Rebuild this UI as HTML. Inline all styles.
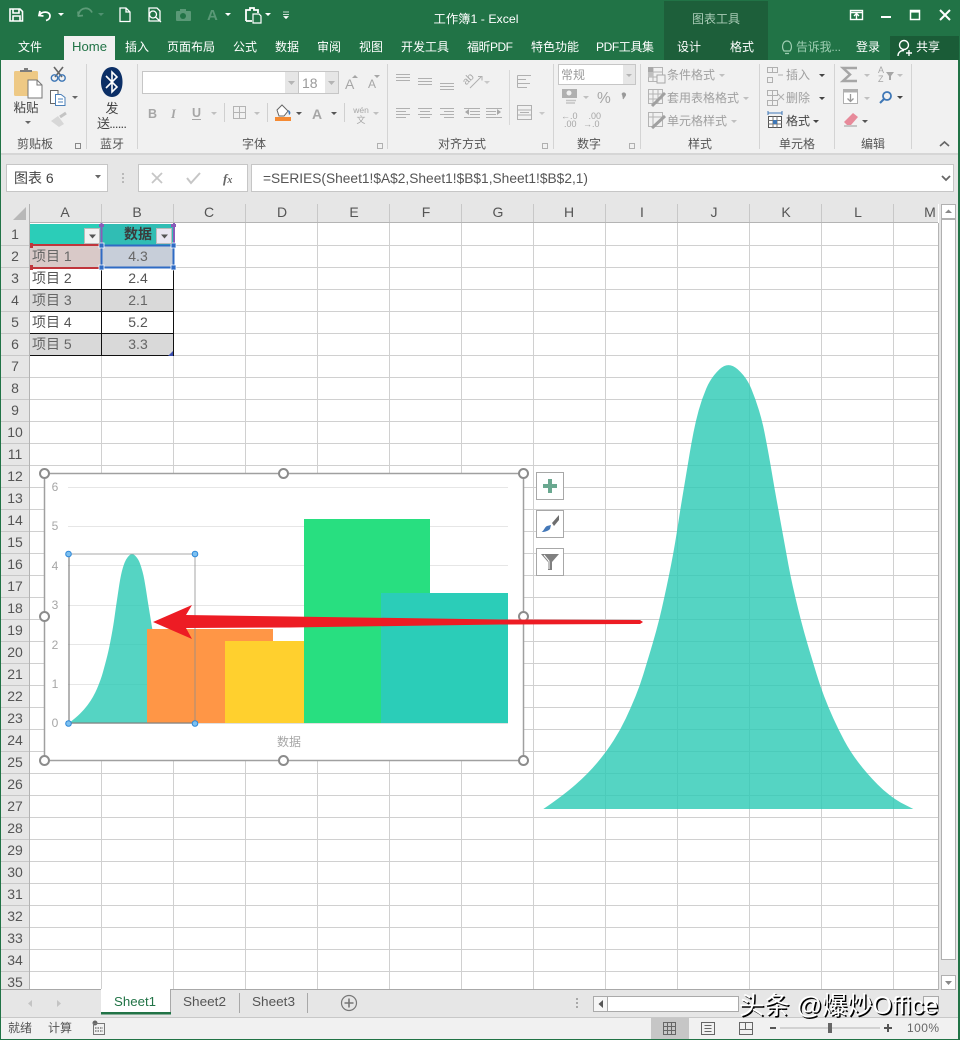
<!DOCTYPE html>
<html><head><meta charset="utf-8"><title>工作簿1 - Excel</title>
<style>
html,body{margin:0;padding:0;width:960px;height:1040px;overflow:hidden;background:#fff}
svg{display:block}
text{font-family:"Liberation Sans","Noto Sans CJK SC",sans-serif;font-size:12px;white-space:pre}
.w{fill:#fff}.d{fill:#444}.g{fill:#a6a6a6}.m{text-anchor:middle}
.h text{font-size:14px;fill:#555}
</style></head><body>
<svg width="960" height="1040" viewBox="0 0 960 1040" xmlns="http://www.w3.org/2000/svg">
<defs>
<path id="bell" d="M40 1377Q100 1336 137.5 1303Q175 1270 202.5 1237Q230 1204 251 1171Q272 1138 287.5 1105Q303 1072 316.5 1039Q330 1006 340 973Q350 940 360 907Q370 874 379 841Q388 808 395.5 775Q403 742 410 709Q417 676 423.5 643Q430 610 435.5 577Q441 544 446 511Q451 478 456.5 445Q462 412 467.5 379Q473 346 478.5 313Q484 280 490.5 247Q497 214 506 181Q515 148 529 115Q543 82 569 57.5Q595 33 622.5 57.5Q650 82 663.5 115Q677 148 687 181Q697 214 703.5 247Q710 280 716 313Q722 346 727.5 379Q733 412 739 445Q745 478 751 511Q757 544 763 577Q769 610 775 643Q781 676 788.5 709Q796 742 804 775Q812 808 821 841Q830 874 840 907Q850 940 860 973Q870 1006 882.5 1039Q895 1072 910 1105Q925 1138 942.5 1171Q960 1204 985 1237Q1010 1270 1042.5 1303Q1075 1336 1112.5 1358L1150 1377Z"/>
</defs>

<!-- title bar -->
<rect width="960" height="60" fill="#217346"/>
<rect x="664" y="1" width="104" height="59" fill="#1d5f3a"/>
<rect x="890" y="36" width="69" height="24" fill="#1a5c37"/>
<rect x="64" y="36" width="51" height="24" fill="#f1f1f1"/>
<!-- QAT icons -->
<g fill="none" stroke="#fff" stroke-width="1.6">
<path d="M10 9H20L22.5 11.5V21H10Z"/><path d="M13 9V13H19V9M13 21V16H20V21"/>
<path d="M40 11L39 15.5L43.5 16M39.5 15C42 11 50 11 50 16C50 18.5 48 20 46 20.5" stroke-width="1.8"/>
<path d="M120 8H126L130 12V21.500H120Z M126 8V12H130" stroke-width="1.3"/>
<path d="M149 8H157L160 11V21H149Z M153 18A3.5 3.5 0 1 0 153 11A3.5 3.5 0 1 0 153 18M155.5 17L161 22" stroke-width="1.3"/>
<path d="M246 21V10H250V8H254V10H258V13M246 21H252" stroke-width="1.8"/>
<path d="M253 14H259L261 16V23H253Z" stroke-width="1.2"/>
</g>
<path d="M92 11.5A7 7 0 0 0 79 12L78 15M78 10.5L78.5 15L83 14.5" fill="none" stroke="#5d9b78" stroke-width="1.8" transform="translate(0,1)"/>
<rect x="176" y="11" width="15" height="10" rx="1" fill="#5a9977"/><rect x="180" y="9" width="6" height="3" fill="#5a9977"/><circle cx="183" cy="16" r="3" fill="#217346"/>
<text x="207" y="20" style="font-size:15px;font-weight:bold" fill="#5a9977">A</text>
<path d="M58 13H64L61 16Z" fill="#fff"/><path d="M98 13H104L101 16Z" fill="#4f9170"/>
<path d="M225 13H231L228 16ZM265 13H271L268 16Z" fill="#fff"/>
<path d="M283 12H289M283 14.5H289M284 16.5H288L286 18.5Z" stroke="#fff" fill="#fff" stroke-width=".8"/>
<text x="476" y="23" class="w m" textLength="85" lengthAdjust="spacingAndGlyphs">工作簿1 - Excel</text>
<text x="716" y="23" class="m" fill="#a9cbb6">图表工具</text>
<!-- window buttons -->
<g fill="none" stroke="#fff" stroke-width="1.4">
<rect x="850.5" y="10.5" width="12" height="9"/><path d="M856.5 19V14M854 16L856.5 13.5L859 16M850.5 12.5H862.5"/>
<path d="M881 17H891" stroke-width="2"/>
<rect x="910.5" y="10.5" width="9" height="9" stroke-width="1.5"/><path d="M910.5 11.5H919.5" stroke-width="2.2"/>
<path d="M940 10L950 20M950 10L940 20" stroke-width="2"/>
</g>
<!-- tabs -->
<text x="18" y="51" class="w">文件</text>
<text x="72" y="51" style="font-size:13px" fill="#217346" textLength="35" lengthAdjust="spacingAndGlyphs">Home</text>
<text x="125" y="51" class="w">插入</text><text x="167" y="51" class="w">页面布局</text>
<text x="233" y="51" class="w">公式</text><text x="275" y="51" class="w">数据</text>
<text x="317" y="51" class="w">审阅</text><text x="359" y="51" class="w">视图</text>
<text x="401" y="51" class="w">开发工具</text>
<text x="467" y="51" class="w" textLength="46">福昕PDF</text>
<text x="531" y="51" class="w">特色功能</text>
<text x="596" y="51" class="w" textLength="58">PDF工具集</text>
<text x="677" y="51" class="w">设计</text><text x="730" y="51" class="w">格式</text>
<text x="796" y="51" fill="#9dcdb1" textLength="45">告诉我...</text>
<text x="856" y="51" class="w">登录</text><text x="916" y="51" class="w">共享</text>
<path d="M785 53.5H789M784 51C781 47 783 41 787 41C791 41 793 47 790 51Z" fill="none" stroke="#9dcdb1" stroke-width="1.2"/>
<circle cx="904" cy="45" r="4.5" fill="none" stroke="#fff" stroke-width="1.4"/><path d="M898 56C898 52 901 50.5 904 50.5M906 53H912M909 50V56" fill="none" stroke="#fff" stroke-width="1.4"/>

<!-- ribbon -->
<rect y="60" width="960" height="93" fill="#f1f1f1"/>
<rect y="153" width="960" height="2" fill="#d6d6d6"/>
<rect y="155" width="960" height="49" fill="#e6e6e6"/>
<path d="M86.5 64V149M137.5 64V149M387.5 64V149M553.5 64V149M640.5 64V149M759.5 64V149M834.5 64V149M911.5 64V149" stroke="#d4d4d4"/>
<text x="35" y="148" class="m" fill="#555">剪贴板</text>
<text x="112" y="148" class="m" fill="#555">蓝牙</text>
<text x="254" y="148" class="m" fill="#555">字体</text>
<text x="462" y="148" class="m" fill="#555">对齐方式</text>
<text x="589" y="148" class="m" fill="#555">数字</text>
<text x="700" y="148" class="m" fill="#555">样式</text>
<text x="797" y="148" class="m" fill="#555">单元格</text>
<text x="873" y="148" class="m" fill="#555">编辑</text>
<!-- clipboard -->
<rect x="14" y="71" width="24" height="25" rx="1.5" fill="#eec985"/>
<path d="M20 72V70H24V68H28V70H32V72Z" fill="#7d7d7d"/>
<path d="M28 80H37L42 85V98H28Z" fill="#fff" stroke="#777"/><path d="M37 80V85H42" fill="none" stroke="#777"/>
<text x="26" y="112" class="m d" style="font-size:12.5px">粘贴</text>
<path d="M25 121H31L28 124Z" fill="#666"/>
<path d="M54 67L62 77M63 67L55 77" stroke="#666" stroke-width="1.6"/><circle cx="54.500" cy="78" r="3.200" fill="none" stroke="#3e77b6" stroke-width="1.4"/><circle cx="62" cy="78" r="3.200" fill="none" stroke="#3e77b6" stroke-width="1.4"/>
<path d="M50.500 90.500H58V103.500H50.500Z" fill="#fff" stroke="#666"/><path d="M55.500 94.500H61L65 97.500V105.500H55.500Z" fill="#fff" stroke="#4a7fb8"/><path d="M58 99H63M58 102H63" stroke="#4a7fb8"/>
<path d="M72 96H78L75 99Z" fill="#666"/>
<path d="M51 121L58 116L64 124L59 127Z" fill="#d7d7d7"/><path d="M60 117L66 113" stroke="#c4c4c4" stroke-width="3"/>
<!-- bluetooth -->
<path d="M112 67C119 67 122.5 74 122.5 82C122.5 90 119 97 112 97C105 97 101 90 101 82C101 74 105 67 112 67Z" fill="#0c2f66"/>
<path d="M106 76L117 87L112 92V72L117 77L106 88" fill="none" stroke="#fff" stroke-width="1.6"/>
<text x="112" y="113" class="m d" style="font-size:13px">发</text>
<text x="97" y="128" class="d" style="font-size:13px" textLength="30">送......</text>
<!-- font group -->
<rect x="142.5" y="71.5" width="196" height="22" fill="#fff" stroke="#c6c6c6"/>
<rect x="285" y="72" width="13" height="21" fill="#e6e6e6"/><rect x="325" y="72" width="13" height="21" fill="#e6e6e6"/>
<path d="M298.5 72V93" stroke="#c6c6c6"/>
<path d="M288 81H295L291.500 85Z M328 81H335L331.500 85Z" fill="#b4b4b4"/>
<text x="302" y="88" style="font-size:14px" fill="#9a9a9a">18</text>
<text x="345" y="89" style="font-size:14px" fill="#a6a6a6">A</text><path d="M352 78H358L355 75Z" fill="#a6a6a6"/>
<text x="368" y="88" style="font-size:12px" fill="#a6a6a6">A</text><path d="M374 75H380L377 78Z" fill="#a6a6a6"/>
<text x="148" y="118" style="font-size:12.5px;font-weight:bold" fill="#a6a6a6">B</text>
<text x="171" y="118" style="font-size:12.5px;font-style:italic;font-family:'Liberation Serif',serif;font-weight:bold" fill="#a6a6a6">I</text>
<text x="192" y="117" style="font-size:12.5px;font-weight:bold" fill="#a6a6a6">U</text><path d="M192 119.500H201" stroke="#a6a6a6"/>
<path d="M211 112H217L214 115ZM254 112H260L257 115Z" fill="#c0c0c0"/>
<path d="M296 112H302L299 115ZM331 112H337L334 115Z" fill="#555"/>
<path d="M224.500 103V122M267.500 103V122M344.500 103V122" stroke="#d0d0d0"/>
<rect x="233.500" y="106.500" width="12" height="12" fill="none" stroke="#b4b4b4"/><path d="M239.500 106.500V118.500M233.500 112.500H245.500" stroke="#b4b4b4"/>
<path d="M277 110L282 105L288 111L284 116H279Z" fill="#fff" stroke="#666"/><path d="M288 110C291 111 291 114 289 115Z" fill="#3e77b6"/><rect x="275" y="117" width="16" height="4" fill="#f58a33"/>
<text x="312" y="119" style="font-size:14px;font-weight:bold" fill="#a6a6a6">A</text>
<text x="361" y="113" class="m" style="font-size:8.500px" fill="#a6a6a6">wén</text><text x="361" y="123" class="m" style="font-size:9px" fill="#a6a6a6">文</text>
<path d="M373 112H379L376 115Z" fill="#c0c0c0"/>
<g fill="none" stroke="#b0b0b0">
<rect x="75.500" y="143.500" width="5" height="5" stroke="#888"/>
<rect x="377.500" y="143.500" width="5" height="5"/><rect x="542.500" y="143.500" width="5" height="5"/><rect x="629.500" y="143.500" width="5" height="5"/>
<!-- alignment -->
<path d="M396 74.500H410M396 77.500H410M396 80.500H410M418 78.500H432M418 81.500H432M418 84.500H432M440 83.500H454M440 86.500H454M440 89.500H454"/>
<path d="M396 108.500H410M396 111.500H406M396 114.500H410M396 117.500H406M418 108.500H432M420 111.500H430M418 114.500H432M420 117.500H430M440 108.500H454M444 111.500H454M440 114.500H454M444 117.500H454"/>
<path d="M470 88L481 77M478 76.500H482V80.500"/>
<path d="M464 108.500H480M470 111.500H480M470 114.500H480M464 117.500H480M486 108.500H502M486 111.500H496M486 114.500H496M486 117.500H502"/>
<path d="M517.500 75.500H531M517.500 79.500H526M517.500 83.500H530M517.500 87.500H527M517.500 75.500V87.500"/>
<rect x="517.500" y="105.500" width="14" height="14"/><path d="M517.500 110H531.500M517.500 115H531.500M520 112.500H529"/>
<path d="M509.500 70V125" stroke="#d8d8d8"/>
</g>
<path d="M465 112L469 109V115ZM501 112L497 109V115Z" fill="#a8a8a8"/>
<path d="M484 81H490L487 84ZM539 112H545L542 115Z" fill="#c8c8c8"/>
<text x="464" y="84" style="font-size:10.500px" fill="#a8a8a8" transform="rotate(-45 467 82)">ab</text>
<!-- number -->
<rect x="558.500" y="64.500" width="77" height="20" fill="#fff" stroke="#c6c6c6"/><rect x="623" y="65" width="12" height="19" fill="#e6e6e6"/><path d="M626 74H632L629 77Z" fill="#b4b4b4"/>
<text x="561" y="79" fill="#9a9a9a">常规</text>
<rect x="562" y="89" width="15" height="9" fill="#b0b0b0"/><circle cx="569" cy="93" r="2.500" fill="#f1f1f1"/><path d="M566 100.500H576M566 103H575" stroke="#c4c4c4" stroke-width="1.500"/>
<path d="M583 96H589L586 99Z" fill="#c0c0c0"/>
<text x="597" y="103" style="font-size:15.500px" fill="#a6a6a6">%</text>
<path d="M622 94.500a1.800 1.800 0 1 1 3 1.500L623 99" fill="#999" stroke="#999"/>
<text x="561" y="119" style="font-size:9px" fill="#a6a6a6">←.0</text><text x="564" y="127" style="font-size:9px" fill="#a6a6a6">.00</text>
<text x="586" y="119" style="font-size:9px" fill="#a6a6a6"> .00</text><text x="583" y="127" style="font-size:9px" fill="#a6a6a6">→.0</text>
<!-- styles -->
<g fill="none" stroke="#b4b4b4">
<rect x="648.500" y="67.500" width="14" height="14" fill="#f1f1f1"/><path d="M648.500 72H662.500M648.500 77H662.500M653 67.500V81.500"/>
<rect x="648.500" y="89.500" width="14" height="14"/><path d="M648.500 94H662.500M648.500 99H662.500M653 89.500V103.500M658 89.500V103.500"/>
<rect x="648.500" y="112.500" width="14" height="14"/><path d="M648.500 117H662.500M653 112.500V126.500"/>
</g>
<rect x="648" y="67" width="5" height="5" fill="#a8a8a8"/><rect x="648" y="72" width="5" height="5" fill="#c0c0c0"/><rect x="657" y="75" width="8" height="8" fill="#f1f1f1" stroke="#a8a8a8"/>
<path d="M652 106L665 93" stroke="#a0a0a0" stroke-width="3"/><path d="M652 128L665 116" stroke="#a0a0a0" stroke-width="3"/>
<text x="667" y="79" fill="#a0a0a0">条件格式</text>
<text x="667" y="102" fill="#a0a0a0">套用表格格式</text>
<text x="667" y="125" fill="#a0a0a0">单元格样式</text>
<path d="M719 74H725L722 77ZM743 97H749L746 100ZM731 120H737L734 123Z" fill="#c0c0c0"/>
<!-- cells -->
<g fill="none" stroke="#b0b0b0">
<path d="M767.500 67.500H777.500V72.500H767.500ZM767.500 77.500H772.500V82.500H767.500ZM772.500 67.500V72.500M778 75H783"/>
<path d="M767.500 90.500H777.500V95.500H767.500ZM767.500 100.500H777.500V105.500H767.500ZM772.500 90.500V105.500M778 94L784 100M784 94L778 100"/>
</g>
<text x="786" y="79" fill="#a0a0a0">插入</text><text x="786" y="102" fill="#a0a0a0">删除</text>
<text x="786" y="125" fill="#444">格式</text>
<rect x="768.500" y="116.500" width="13" height="11" fill="#fff" stroke="#555"/><path d="M768.500 120.500H781.500M768.500 124H781.500M773 116.500V127.500M777 116.500V127.500" stroke="#777"/><rect x="773" y="120" width="4" height="4" fill="#3e77b6"/>
<path d="M768 113H782M768 111V115M782 111V115" stroke="#3e77b6"/>
<path d="M819 74H825L822 77ZM819 97H825L822 100Z" fill="#444"/><path d="M813 120H819L816 123Z" fill="#444"/>
<!-- editing -->
<path d="M857 68H843L850 74.500L843 81H857" fill="none" stroke="#a6a6a6" stroke-width="2.500"/>
<path d="M864 74H870L867 77ZM864 97H870L867 100ZM897 74H903L900 77Z" fill="#c0c0c0"/>
<text x="878" y="73" style="font-size:9px" fill="#a6a6a6">A</text><text x="878" y="82" style="font-size:9px" fill="#a6a6a6">Z</text><path d="M886 72H894L891 76V80H889V76Z" fill="#a6a6a6"/>
<rect x="843.500" y="89.500" width="14" height="14" fill="#fff" stroke="#b0b0b0"/><rect x="843.500" y="89.500" width="14" height="3" fill="#b0b0b0"/><path d="M850.500 94V101M847.500 98.500L850.500 101.500L853.500 98.500" fill="none" stroke="#999" stroke-width="1.300"/>
<circle cx="887" cy="96" r="4" fill="none" stroke="#3e77b6" stroke-width="1.800"/><path d="M884 99L880 103" stroke="#3e77b6" stroke-width="2"/>
<path d="M897 96H903L900 99Z" fill="#444"/>
<path d="M844 122L853 113L858 117L851 125H847Z" fill="#e78a9a"/><path d="M844 126H857" stroke="#999"/>
<path d="M862 120H868L865 123Z" fill="#555"/>
<path d="M940 146L944.500 142L949 146" fill="none" stroke="#666" stroke-width="1.600"/>

<!-- formula bar -->
<rect x="6.500" y="164.500" width="101" height="27" fill="#fff" stroke="#c6c6c6"/>
<text x="14" y="183" style="font-size:14px" fill="#444">图表 6</text>
<path d="M95 175H101L98 178.500Z" fill="#666"/>
<path d="M123 173V175M123 177V179M123 181V183" stroke="#aaa" stroke-width="1.500"/>
<rect x="138.500" y="164.500" width="109" height="27" fill="#fff" stroke="#c6c6c6"/>
<path d="M152 173L162 183M162 173L152 183" stroke="#c6c6c6" stroke-width="1.800"/>
<path d="M187 178L191 183L200 173" fill="none" stroke="#c6c6c6" stroke-width="2"/>
<text x="223" y="183" style="font-size:13px;font-family:'Liberation Serif',serif;font-style:italic;font-weight:bold" fill="#666">f<tspan style="font-size:10px">x</tspan></text>
<rect x="251.500" y="164.500" width="702" height="27" fill="#fff" stroke="#c6c6c6"/>
<text x="263" y="183" style="font-size:14px" fill="#555" textLength="325" lengthAdjust="spacingAndGlyphs">=SERIES(Sheet1!$A$2,Sheet1!$B$1,Sheet1!$B$2,1)</text>
<path d="M942 176L946 180L950 176" fill="none" stroke="#666" stroke-width="1.800"/>

<!-- sheet -->
<rect x="30" y="223" width="908" height="767" fill="#fff"/>
<path fill="none" stroke="#d0d0d0" d="M101.500 223V990M173.500 223V990M245.500 223V990M317.500 223V990M389.500 223V990M461.500 223V990M533.500 223V990M605.500 223V990M677.500 223V990M749.500 223V990M821.500 223V990M893.500 223V990
M30 245.500H938M30 267.500H938M30 289.500H938M30 311.500H938M30 333.500H938M30 355.500H938M30 377.500H938M30 399.500H938M30 421.500H938M30 443.500H938M30 465.500H938M30 487.500H938M30 509.500H938M30 531.500H938M30 553.500H938M30 575.500H938M30 597.500H938M30 619.500H938M30 641.500H938M30 663.500H938M30 685.500H938M30 707.500H938M30 729.500H938M30 751.500H938M30 773.500H938M30 795.500H938M30 817.500H938M30 839.500H938M30 861.500H938M30 883.500H938M30 905.500H938M30 927.500H938M30 949.500H938M30 971.500H938"/>
<!-- headers -->
<rect x="0" y="204" width="30" height="786" fill="#e6e6e6"/>
<rect x="30" y="204" width="908" height="19" fill="#e6e6e6"/>
<path d="M29.500 204V990M30 222.500H938M938.500 223V990" stroke="#b4b4b4"/>
<path d="M26 207V220H13Z" fill="#b8b8b8"/>
<path fill="none" stroke="#c8c8c8" d="M101.500 204V222M173.500 204V222M245.500 204V222M317.500 204V222M389.500 204V222M461.500 204V222M533.500 204V222M605.500 204V222M677.500 204V222M749.500 204V222M821.500 204V222M893.500 204V222
M0 245.500H29M0 267.500H29M0 289.500H29M0 311.500H29M0 333.500H29M0 355.500H29M0 377.500H29M0 399.500H29M0 421.500H29M0 443.500H29M0 465.500H29M0 487.500H29M0 509.500H29M0 531.500H29M0 553.500H29M0 575.500H29M0 597.500H29M0 619.500H29M0 641.500H29M0 663.500H29M0 685.500H29M0 707.500H29M0 729.500H29M0 751.500H29M0 773.500H29M0 795.500H29M0 817.500H29M0 839.500H29M0 861.500H29M0 883.500H29M0 905.500H29M0 927.500H29M0 949.500H29M0 971.500H29"/>
<g class="h" text-anchor="middle">
<text x="65" y="217">A</text><text x="137" y="217">B</text><text x="209" y="217">C</text><text x="282" y="217">D</text><text x="354" y="217">E</text><text x="426" y="217">F</text><text x="498" y="217">G</text><text x="569" y="217">H</text><text x="642" y="217">I</text><text x="714" y="217">J</text><text x="786" y="217">K</text><text x="858" y="217">L</text><text x="930" y="217">M</text>
<text x="15" y="239">1</text><text x="15" y="261">2</text><text x="15" y="283">3</text><text x="15" y="305">4</text><text x="15" y="327">5</text><text x="15" y="349">6</text><text x="15" y="371">7</text><text x="15" y="393">8</text><text x="15" y="415">9</text><text x="15" y="437">10</text><text x="15" y="459">11</text><text x="15" y="481">12</text><text x="15" y="503">13</text><text x="15" y="525">14</text><text x="15" y="547">15</text><text x="15" y="569">16</text><text x="15" y="591">17</text><text x="15" y="613">18</text><text x="15" y="635">19</text><text x="15" y="657">20</text><text x="15" y="679">21</text><text x="15" y="701">22</text><text x="15" y="723">23</text><text x="15" y="745">24</text><text x="15" y="767">25</text><text x="15" y="789">26</text><text x="15" y="811">27</text><text x="15" y="833">28</text><text x="15" y="855">29</text><text x="15" y="877">30</text><text x="15" y="899">31</text><text x="15" y="921">32</text><text x="15" y="943">33</text><text x="15" y="965">34</text><text x="15" y="987">35</text>
</g>

<!-- table -->
<rect x="30" y="224" width="71" height="21" fill="#2bcdb8"/>
<rect x="102" y="224" width="71" height="21" fill="#30bdb4"/>
<rect x="30" y="246" width="71" height="21" fill="#d9c9c8"/><rect x="102" y="246" width="71" height="21" fill="#c7ced9"/>
<rect x="30" y="290" width="143" height="21" fill="#d9d9d9"/><rect x="30" y="334" width="143" height="21" fill="#d9d9d9"/>
<path d="M30 289.500H174M30 311.500H174M30 333.500H174M30 355.500H174M101.500 268V356M173.500 268V356" stroke="#111"/>
<path d="M30 245H101M30 268H101" stroke="#c0353c" stroke-width="2"/>
<rect x="30" y="243" width="3" height="5" fill="#c0353c"/><rect x="30" y="265" width="3" height="5" fill="#c0353c"/>
<path d="M101.500 223V245M174 223V245" stroke="#8a5cb8" stroke-width="2"/><rect x="99" y="224" width="5" height="3" fill="#8a5cb8"/><rect x="171" y="224" width="5" height="3" fill="#8a5cb8"/>
<rect x="101.500" y="245.500" width="72" height="22" fill="none" stroke="#2f6bc4" stroke-width="2"/>
<path d="M99 243h5v5h-5zM171 243h5v5h-5zM99 265h5v5h-5zM171 265h5v5h-5z" fill="#2f6bc4" stroke="#fff" stroke-width=".8"/>
<rect x="84.500" y="228.500" width="15" height="15" fill="#f1f1f1" stroke="#bbb"/><path d="M89 234.500H96L92.500 238.500Z" fill="#555"/>
<rect x="156.500" y="228.500" width="15" height="15" fill="#e9e6f1" stroke="#bbb"/><path d="M161 234.500H168L164.500 238.500Z" fill="#555"/>
<text x="124" y="239" style="font-size:14px;font-weight:bold" fill="#3b3b3b">数据</text>
<text x="32" y="261" style="font-size:14px" fill="#666">项目 1</text>
<text x="32" y="283" style="font-size:14px" fill="#555">项目 2</text>
<text x="32" y="305" style="font-size:14px" fill="#666">项目 3</text>
<text x="32" y="327" style="font-size:14px" fill="#555">项目 4</text>
<text x="32" y="349" style="font-size:14px" fill="#666">项目 5</text>
<g text-anchor="middle">
<text x="138" y="261" style="font-size:14px" fill="#666">4.3</text>
<text x="138" y="283" style="font-size:14px" fill="#555">2.4</text>
<text x="138" y="305" style="font-size:14px" fill="#666">2.1</text>
<text x="138" y="327" style="font-size:14px" fill="#555">5.2</text>
<text x="138" y="349" style="font-size:14px" fill="#666">3.3</text>
</g>
<path d="M173 351V356H168Z" fill="#3b4fb0"/>

<!-- big bell -->
<g transform="translate(530,350) scale(.33333)"><use href="#bell" fill="#2bc9b4" fill-opacity=".8"/></g>

<!-- chart -->
<rect x="44.500" y="473.500" width="479" height="287" fill="#fff" stroke="#a0a0a0" stroke-width="1.500"/>
<path d="M68 487.500H508M68 526.500H508M68 565.500H508M68 605.500H508M68 644.500H508M68 684.500H508" stroke="#e6e6e6"/>
<path d="M68 723.500H508" stroke="#e0e0e0"/>
<g text-anchor="middle">
<text x="55" y="491" fill="#a6a6a6">6</text><text x="55" y="530" fill="#a6a6a6">5</text><text x="55" y="570" fill="#a6a6a6">4</text><text x="55" y="609" fill="#a6a6a6">3</text><text x="55" y="649" fill="#a6a6a6">2</text><text x="55" y="688" fill="#a6a6a6">1</text><text x="55" y="727" fill="#a6a6a6">0</text>
</g>
<text x="289" y="746" class="m" fill="#a6a6a6">数据</text>
<g transform="translate(64.460,548.290) scale(.1135,.12688)"><use href="#bell" fill="#2bc9b4" fill-opacity=".8"/></g>
<rect x="147" y="629" width="126" height="94" fill="#ff9646"/>
<rect x="225" y="641" width="126" height="82" fill="#ffd02e"/>
<rect x="304" y="519" width="126" height="204" fill="#28df80"/>
<rect x="381" y="593" width="127" height="130" fill="#2bcdb8"/>
<path d="M69 554H195V723" fill="none" stroke="#8c8c8c" stroke-opacity=".6" stroke-width="1.300"/>
<path d="M69 554V723H195" fill="none" stroke="#808080" stroke-opacity=".9" stroke-width="1.300"/>
<g fill="#7cc0f0" stroke="#2f88d8" stroke-width="1">
<circle cx="68.500" cy="554" r="2.800"/><circle cx="195" cy="554" r="2.800"/><circle cx="68.500" cy="723.500" r="2.800"/><circle cx="195" cy="723.500" r="2.800"/>
</g>
<g fill="#fff" stroke="#8c8c8c" stroke-width="2">
<circle cx="44.500" cy="473.500" r="4.500"/><circle cx="283.500" cy="473.500" r="4.500"/><circle cx="523.500" cy="473.500" r="4.500"/>
<circle cx="44.500" cy="616.500" r="4.500"/><circle cx="523.500" cy="616.500" r="4.500"/>
<circle cx="44.500" cy="760.500" r="4.500"/><circle cx="283.500" cy="760.500" r="4.500"/><circle cx="523.500" cy="760.500" r="4.500"/>
</g>
<!-- chart buttons -->
<g fill="#fff" stroke="#a8a8a8" stroke-width="1">
<rect x="536.500" y="472.500" width="27" height="27"/><rect x="536.500" y="510.500" width="27" height="27"/><rect x="536.500" y="548.500" width="27" height="27"/>
</g>
<path d="M543 486H557M550 479V493" stroke="#6aa890" stroke-width="4"/>
<path d="M552 523L559 515V520L554 526Z" fill="#6e6e6e"/><path d="M541.500 532C544 531 544.500 527 547 526L551 525L550 529C548 531 545 532 541.500 532Z" fill="#4478b8"/>
<path d="M541 554H559L552 562V570H548V562Z" fill="#808080"/><path d="M544 555L549 561V569" fill="none" stroke="#fff" stroke-width="1"/>

<!-- arrow -->
<path d="M153 622L192 605L186 615L290 616.500L500 619.500L640 620L643 622L640 624L500 624.500L290 627.500L186 628L192 639Z" fill="#ed1c24"/>

<!-- scrollbar v -->
<rect x="939" y="204" width="19" height="786" fill="#e6e6e6"/>
<rect x="941.500" y="204.500" width="14" height="14" fill="#fff" stroke="#b0b0b0"/><path d="M945 213H952L948.500 209.500Z" fill="#888"/>
<rect x="941.500" y="219.500" width="14" height="740" fill="#fff" stroke="#b0b0b0"/>
<rect x="941.500" y="975.500" width="14" height="14" fill="#fff" stroke="#b0b0b0"/><path d="M945 981H952L948.500 985Z" fill="#888"/>

<!-- sheet tabs -->
<rect x="0" y="990" width="960" height="28" fill="#e6e6e6"/>
<path d="M0 989.500H938" stroke="#a8a8a8"/>
<rect x="101" y="989" width="70" height="25" fill="#fff"/>
<path d="M170.500 989V1012" stroke="#a8a8a8"/>
<rect x="101" y="1012" width="70" height="2.500" fill="#217346"/>
<path d="M239.500 993V1013M307.500 993V1013" stroke="#a8a8a8"/>
<text x="114" y="1006" style="font-size:13px" fill="#217346" textLength="42" lengthAdjust="spacingAndGlyphs">Sheet1</text>
<text x="183" y="1006" style="font-size:13px" fill="#555" textLength="43" lengthAdjust="spacingAndGlyphs">Sheet2</text>
<text x="252" y="1006" style="font-size:13px" fill="#555" textLength="43" lengthAdjust="spacingAndGlyphs">Sheet3</text>
<path d="M32 1000V1007L28 1003.500ZM57 1000V1007L61 1003.500Z" fill="#c4c4c4"/>
<circle cx="349" cy="1003" r="7.500" fill="none" stroke="#777" stroke-width="1.200"/><path d="M344.500 1003H353.500M349 998.500V1007.500" stroke="#777" stroke-width="1.600"/>
<path d="M577 998V1000M577 1002V1004M577 1006V1008" stroke="#999" stroke-width="1.600"/>
<rect x="593.500" y="996.500" width="145" height="15" fill="#fff" stroke="#aaa"/>
<rect x="593.500" y="996.500" width="14" height="15" fill="#f6f6f6" stroke="#aaa"/><path d="M603 1000V1008L598.500 1004Z" fill="#555"/>
<rect x="923.500" y="996.500" width="15" height="15" fill="#f6f6f6" stroke="#aaa"/>

<!-- status bar -->
<rect x="0" y="1018" width="960" height="21" fill="#f1f1f1"/>
<path d="M0 1017.500H960" stroke="#c8c8c8"/>
<text x="8" y="1032" fill="#555">就绪</text><text x="48" y="1032" fill="#555">计算</text>
<circle cx="95" cy="1023" r="2.500" fill="#666"/><rect x="93.500" y="1023.500" width="11" height="11" fill="none" stroke="#777"/><path d="M95 1028H103M95 1031H103" stroke="#666" stroke-dasharray="1.500 1" stroke-width="1.300"/>
<rect x="651" y="1018" width="38" height="21" fill="#c6c6c6"/>
<g fill="none" stroke="#666">
<rect x="663.500" y="1022.500" width="12" height="12"/><path d="M667.500 1022.500V1034.500M671.500 1022.500V1034.500M663.500 1026.500H675.500M663.500 1030.500H675.500"/>
<rect x="701.500" y="1022.500" width="13" height="12"/><path d="M704.500 1025.500H711.500M704.500 1028.500H711.500M704.500 1031.500H711.500"/>
<rect x="739.500" y="1022.500" width="13" height="12"/><path d="M739.500 1029.500H752.500M745.500 1022.500V1029.500"/>
</g>
<path d="M770 1028H776" stroke="#555" stroke-width="2"/>
<path d="M780 1028H880" stroke="#b4b4b4"/><rect x="828" y="1023" width="4" height="10" fill="#666"/>
<path d="M884 1028H892M888 1024V1032" stroke="#555" stroke-width="2"/>
<text x="907" y="1032" fill="#666" textLength="32">100%</text>

<!-- window edge -->
<path d="M.5 60V1040" stroke="#217346"/><path d="M959 60V1040" stroke="#217346" stroke-width="2"/><path d="M0 1039.500H960" stroke="#217346"/>

<!-- watermark -->
<text x="740.500" y="1015.500" style="font-size:25px" fill="#000" textLength="199" lengthAdjust="spacingAndGlyphs">头条 @爆炒Office</text>
<text x="739" y="1014" style="font-size:25px" fill="#fff" textLength="199" lengthAdjust="spacingAndGlyphs">头条 @爆炒Office</text>
</svg>
</body></html>
